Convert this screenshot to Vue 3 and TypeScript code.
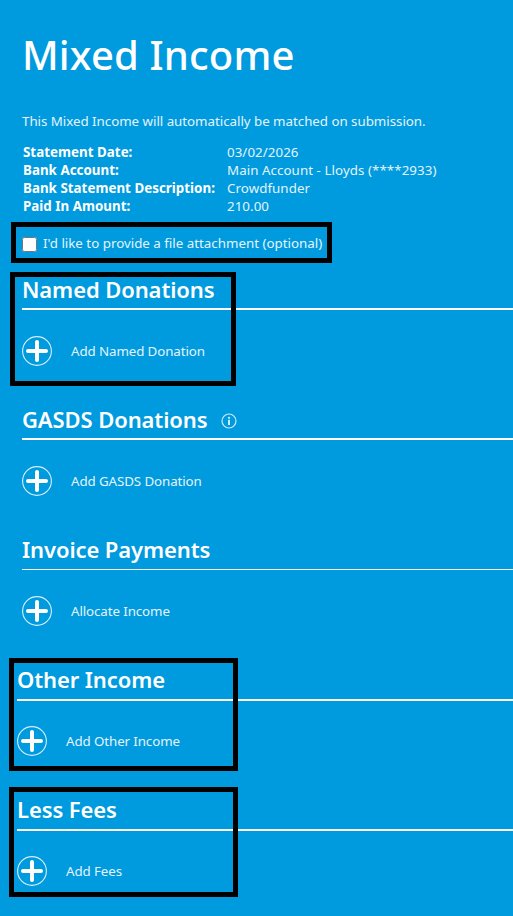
<script setup lang="ts">
interface Section {
  title: string
  action: string
  info?: boolean
  mark?: string
  shifted?: boolean
  thin?: boolean
}
const details = [
  ['Statement Date:', '03/02/2026'],
  ['Bank Account:', 'Main Account - Lloyds (****2933)'],
  ['Bank Statement Description:', 'Crowdfunder'],
  ['Paid In Amount:', '210.00'],
]
const sections: Section[] = [
  { title: 'Named Donations', action: 'Add Named Donation', mark: 'mark-named' },
  { title: 'GASDS Donations', action: 'Add GASDS Donation', info: true },
  { title: 'Invoice Payments', action: 'Allocate Income', thin: true },
  { title: 'Other Income', action: 'Add Other Income', mark: 'mark-other', shifted: true },
  { title: 'Less Fees', action: 'Add Fees', mark: 'mark-less', shifted: true },
]
</script>

<template>
  <main class="page">
    <h1 class="title">Mixed Income</h1>
    <p class="intro">This Mixed Income will automatically be matched on submission.</p>
    <dl class="details">
      <div v-for="row in details" :key="row[0]" class="detail-row">
        <dt>{{ row[0] }}</dt>
        <dd>{{ row[1] }}</dd>
      </div>
    </dl>
    <label class="attach">
      <input type="checkbox" class="check" />
      <span>I'd like to provide a file attachment (optional)</span>
      <i class="mark mark-attach"></i>
    </label>
    <section
      v-for="s in sections"
      :key="s.title"
      class="section"
      :class="{ shifted: s.shifted }"
    >
      <h2 class="heading" :class="{ thin: s.thin }">
        {{ s.title }}
        <svg v-if="s.info" class="info" viewBox="0 0 16 16" width="16" height="16" aria-hidden="true">
          <circle cx="8" cy="8" r="7" fill="none" stroke="#cfeafa" stroke-width="1.2" />
          <rect x="7.1" y="6.8" width="1.8" height="5.2" fill="#e6f5fd" />
          <rect x="7.1" y="3.9" width="1.8" height="1.8" fill="#e6f5fd" />
        </svg>
      </h2>
      <div class="action">
        <svg class="plus" viewBox="0 0 30 30" width="30" height="30" aria-hidden="true">
          <circle cx="15" cy="15" r="14.4" fill="none" stroke="#d8effb" stroke-width="1.1" />
          <path d="M15 6v18M6 15h18" fill="none" stroke="#fff" stroke-width="4" stroke-linecap="round" />
        </svg>
        <span>{{ s.action }}</span>
      </div>
      <i v-if="s.mark" class="mark" :class="s.mark"></i>
    </section>
  </main>
</template>

<style>
html, body { margin: 0; background: #009ade; }
</style>

<style scoped>
.page {
  box-sizing: border-box;
  width: 513px;
  height: 916px;
  padding: 0 0 0 22px;
  background: #009ade;
  color: #fff;
  font-family: "Noto Sans", "Open Sans", sans-serif;
  overflow: hidden;
}
.title {
  margin: 0;
  padding-top: 31px;
  font-size: 40px;
  line-height: 48px;
  font-weight: 500;
  letter-spacing: 0.15px;
}
.intro {
  margin: 0;
  padding-top: 34px;
  font-size: 13.33px;
  line-height: 17px;
  color: #e3f4fd;
  letter-spacing: -0.03px;
}
.details { margin: 13px 0 0 1px; font-size: 13.33px; line-height: 18px; }
.detail-row { display: flex; }
.details dt { width: 204px; font-weight: 700; letter-spacing: 0.03px; }
.details dd { margin: 0; color: #e3f4fd; letter-spacing: 0.06px; }
.attach {
  position: relative;
  display: flex;
  align-items: center;
  gap: 6px;
  height: 31px;
  margin: 12px 0 17px;
  font-size: 13.33px;
  color: #e3f4fd;
}
.check {
  width: 15px;
  height: 15px;
  margin: 3px 0 0;
}
.section {
  position: relative;
  height: 130px;
}
.section.shifted { margin-left: -5px; }
.heading {
  display: flex;
  align-items: flex-start;
  gap: 14px;
  height: 33px;
  margin: 0 -5px 0 0;
  border-bottom: 2px solid #fff;
  font-size: 22px;
  line-height: 28px;
  font-weight: 600;
  letter-spacing: -0.1px;
}
.heading.thin { height: 34px; border-bottom-width: 1px; }
.shifted .heading { height: 34px; margin-right: 0; }
.info { margin-top: 8px; }
.action {
  display: flex;
  align-items: center;
  gap: 19px;
  margin-top: 26px;
  height: 30px;
  font-size: 13.33px;
  line-height: 28px;
  color: #e3f4fd;
  letter-spacing: -0.1px;
}
.shifted .action { margin-top: 25px; }
.plus { flex: none; }
.mark {
  position: absolute;
  box-sizing: border-box;
  border: 5px solid #000;
  pointer-events: none;
}
.mark-attach { left: -11px; top: -5px; width: 321px; height: 41px; }
.mark-named { left: -12px; top: -3px; width: 226px; height: 114px; }
.mark-other { left: -8px; top: -7px; width: 229px; height: 113px; }
.mark-less { left: -8px; top: -8px; width: 229px; height: 110px; }
</style>
